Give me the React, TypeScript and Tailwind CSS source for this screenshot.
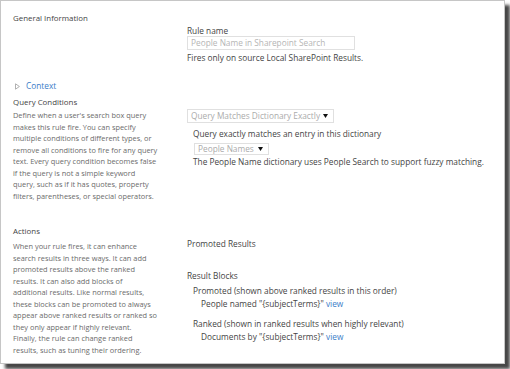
import React from 'react';

const queryHelp = [
  "Define when a user's search box query",
  'makes this rule fire. You can specify',
  'multiple conditions of different types, or',
  'remove all conditions to fire for any query',
  'text. Every query condition becomes false',
  'if the query is not a simple keyword',
  'query, such as if it has quotes, property',
  'filters, parentheses, or special operators.',
];

const actionsHelp = [
  'When your rule fires, it can enhance',
  'search results in three ways. It can add',
  'promoted results above the ranked',
  'results. It can also add blocks of',
  'additional results. Like normal results,',
  'these blocks can be promoted to always',
  'appear above ranked results or ranked so',
  'they only appear if highly relevant.',
  'Finally, the rule can change ranked',
  'results, such as tuning their ordering.',
];

function Arrow() {
  return (
    <svg width="5" height="4" viewBox="0 0 5 4" className="shrink-0">
      <path d="M0 0 H5 L2.5 4 Z" fill="#111" />
    </svg>
  );
}

function Help({lines}: {lines: string[]}) {
  return (
    <div className="text-[7.4px] leading-[11.5px] text-[#6b6b6b]">
      {lines.map((l) => (
        <div key={l} className="whitespace-nowrap">
          {l}
        </div>
      ))}
    </div>
  );
}

export default function App() {
  return (
    <div className="w-[510px] h-[369px] bg-white" style={{fontFamily: '"Open Sans", "Noto Sans", sans-serif'}}>
      <div className="w-[505px] h-[364px] bg-white border border-[#c6c6c6] shadow-[5px_5px_3px_rgba(0,0,0,0.72)] pl-[12px] pt-[11px] text-[#444]">
        {/* general */}
        <div className="flex">
          <div className="w-[174px] text-[7.9px] leading-[12px]">General Information</div>
          <div className="pt-[14px] text-[8.3px]">
            <div className="leading-[10px]">Rule name</div>
            <div className="w-[168px] h-[14px] border border-[#e0e0e0] flex items-center pl-[3px] text-[#b5b5b5]">
              People Name in Sharepoint Search
            </div>
            <div className="mt-[2px] leading-[12px]">Fires only on source Local SharePoint Results.</div>
          </div>
        </div>

        <div className="mt-[16px] h-[12px] flex items-center">
          <svg width="5" height="7" viewBox="0 0 5 7" className="ml-[2px]">
            <path d="M0.5 0.8 L4.4 3.5 L0.5 6.2 Z" fill="none" stroke="#a8a8a8" strokeWidth="0.9" />
          </svg>
          <span className="ml-[6px] text-[8.3px] leading-[12px] text-[#3b7dc8]">Context</span>
        </div>

        {/* query conditions */}
        <div className="mt-[4px] flex">
          <div className="w-[174px]">
            <div className="text-[7.9px] leading-[12px]">Query Conditions</div>
            <div className="mt-[2px]">
              <Help lines={queryHelp} />
            </div>
          </div>
          <div className="pt-[13px] text-[8.3px]">
            <div className="w-[147px] h-[14px] border border-[#e0e0e0] flex items-center justify-between pl-[3px] pr-[5px] text-[#ababab]">
              <span>Query Matches Dictionary Exactly</span>
              <Arrow />
            </div>
            <div className="ml-[6px] mt-[5px] leading-[12px]">Query exactly matches an entry in this dictionary</div>
            <div className="ml-[7px] mt-[3px] w-[75px] h-[12px] border border-[#e0e0e0] flex items-center justify-between pl-[3px] pr-[5px] text-[#ababab]">
              <span>People Names</span>
              <Arrow />
            </div>
            <div className="ml-[6px] mt-[1px] leading-[12px] whitespace-nowrap">
              The People Name dictionary uses People Search to support fuzzy matching.
            </div>
          </div>
        </div>

        {/* actions */}
        <div className="mt-[23px] flex">
          <div className="w-[174px]">
            <div className="text-[7.9px] leading-[12px]">Actions</div>
            <div className="mt-[4px]">
              <Help lines={actionsHelp} />
            </div>
          </div>
          <div className="pt-[13px] text-[8.3px] leading-[12px]">
            <div>Promoted Results</div>
            <div className="mt-[20px]">Result Blocks</div>
            <div className="ml-[6px] mt-[3px]">Promoted (shown above ranked results in this order)</div>
            <div className="ml-[14px] mt-[1px]">
              People named "{'{subjectTerms}'}" <span className="text-[#3b7dc8]">view</span>
            </div>
            <div className="ml-[6px] mt-[8px]">Ranked (shown in ranked results when highly relevant)</div>
            <div className="ml-[14px] mt-[1px]">
              Documents by "{'{subjectTerms}'}" <span className="text-[#3b7dc8]">view</span>
            </div>
          </div>
        </div>
      </div>
    </div>
  );
}
